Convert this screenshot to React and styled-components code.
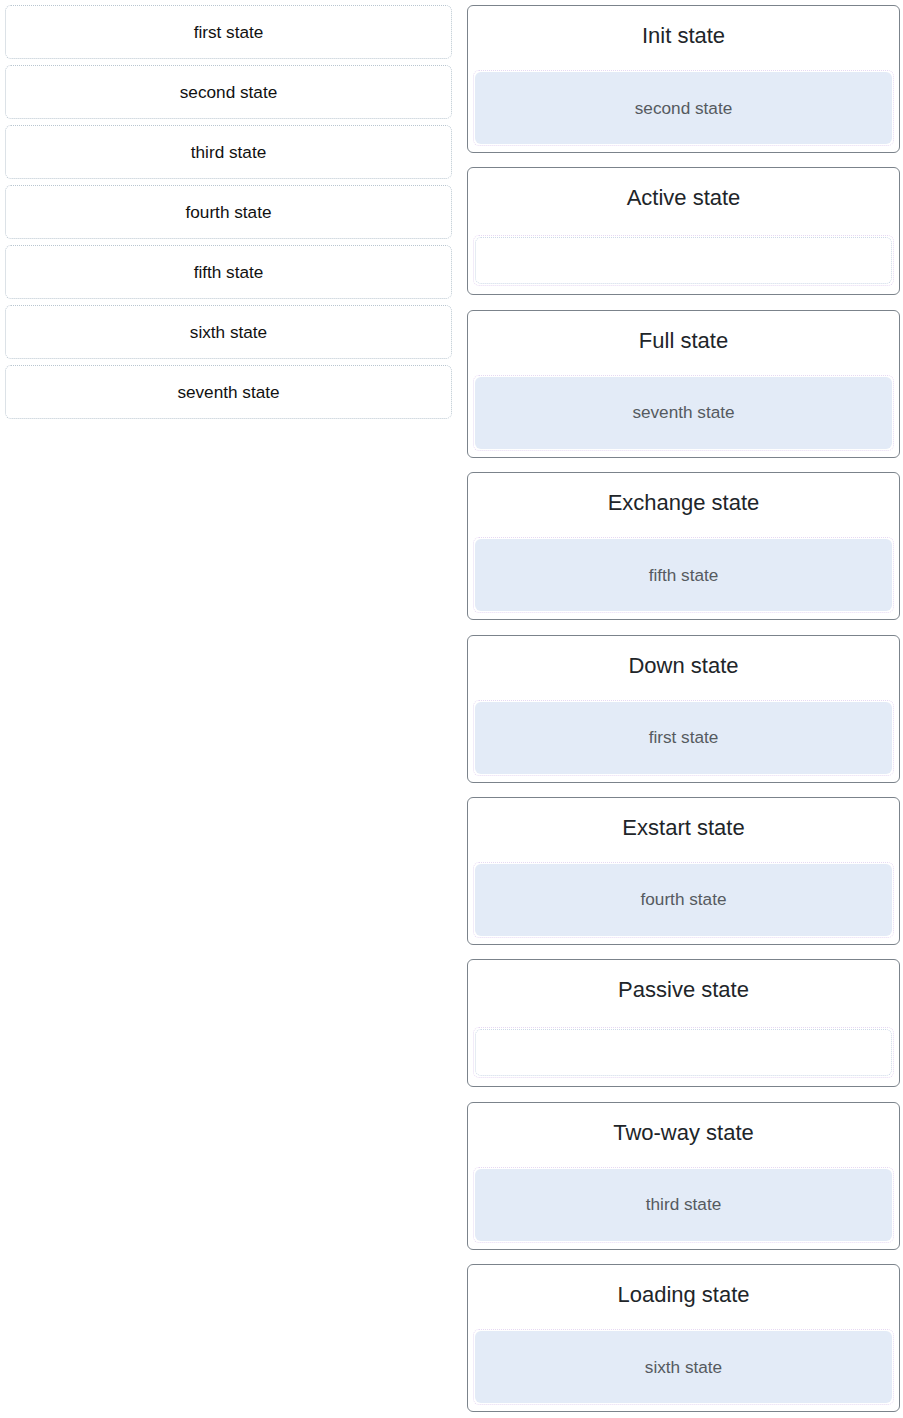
import React from "react";
import styled, { createGlobalStyle } from "styled-components";

const GlobalStyle = createGlobalStyle`
  html, body {
    margin: 0;
    padding: 0;
    background: #ffffff;
  }
  body {
    font-family: "Liberation Sans", Arial, sans-serif;
  }
  * { box-sizing: border-box; }
`;

const Page = styled.div`
  display: grid;
  grid-template-columns: 447px 433px;
  column-gap: 15px;
  align-items: start;
  padding: 5px 0 8px 5px;
`;

const Source = styled.div`
  display: flex;
  flex-direction: column;
  gap: 6px;
`;

const SourceItem = styled.div`
  height: 54px;
  display: flex;
  align-items: center;
  justify-content: center;
  border: 1px dotted #b9c6d0;
  border-radius: 6px;
  font-size: 17.2px;
  color: #111;
`;

const Targets = styled.div`
  display: flex;
  flex-direction: column;
  gap: 14.4px;
`;

const Card = styled.div`
  border: 1px solid #7b838b;
  border-radius: 6px;
  padding: 0 5px 6px;
  background: #fff;
`;

const Title = styled.div`
  font-size: 22px;
  line-height: 26px;
  padding: 17px 0 21px;
  text-align: center;
  color: #212529;
`;

const DropZone = styled.div`
  border: 1px dotted #e6d9f3;
  border-radius: 6px;
  padding: 1px;
  margin: ${(p) => (p.$empty ? "3px 0 2px" : "0")};
  min-height: ${(p) => (p.$empty ? "51px" : "76px")};
`;

const Placeholder = styled.div`
  height: 47px;
  border: 1px dotted #cdd9e8;
  border-radius: 6px;
`;

const Dropped = styled.div`
  height: 72px;
  display: flex;
  align-items: center;
  justify-content: center;
  background: #e3ebf7;
  border-radius: 6px;
  font-size: 17.2px;
  color: #555a60;
`;

const sources = [
  "first state",
  "second state",
  "third state",
  "fourth state",
  "fifth state",
  "sixth state",
  "seventh state",
];

const targets = [
  { title: "Init state", item: "second state" },
  { title: "Active state", item: null },
  { title: "Full state", item: "seventh state" },
  { title: "Exchange state", item: "fifth state" },
  { title: "Down state", item: "first state" },
  { title: "Exstart state", item: "fourth state" },
  { title: "Passive state", item: null },
  { title: "Two-way state", item: "third state" },
  { title: "Loading state", item: "sixth state" },
];

export default function App() {
  return (
    <>
      <GlobalStyle />
      <Page>
        <Source>
          {sources.map((s) => (
            <SourceItem key={s}>{s}</SourceItem>
          ))}
        </Source>
        <Targets>
          {targets.map((t) => (
            <Card key={t.title}>
              <Title>{t.title}</Title>
              <DropZone $empty={!t.item}>
                {t.item ? <Dropped>{t.item}</Dropped> : <Placeholder />}
              </DropZone>
            </Card>
          ))}
        </Targets>
      </Page>
    </>
  );
}
